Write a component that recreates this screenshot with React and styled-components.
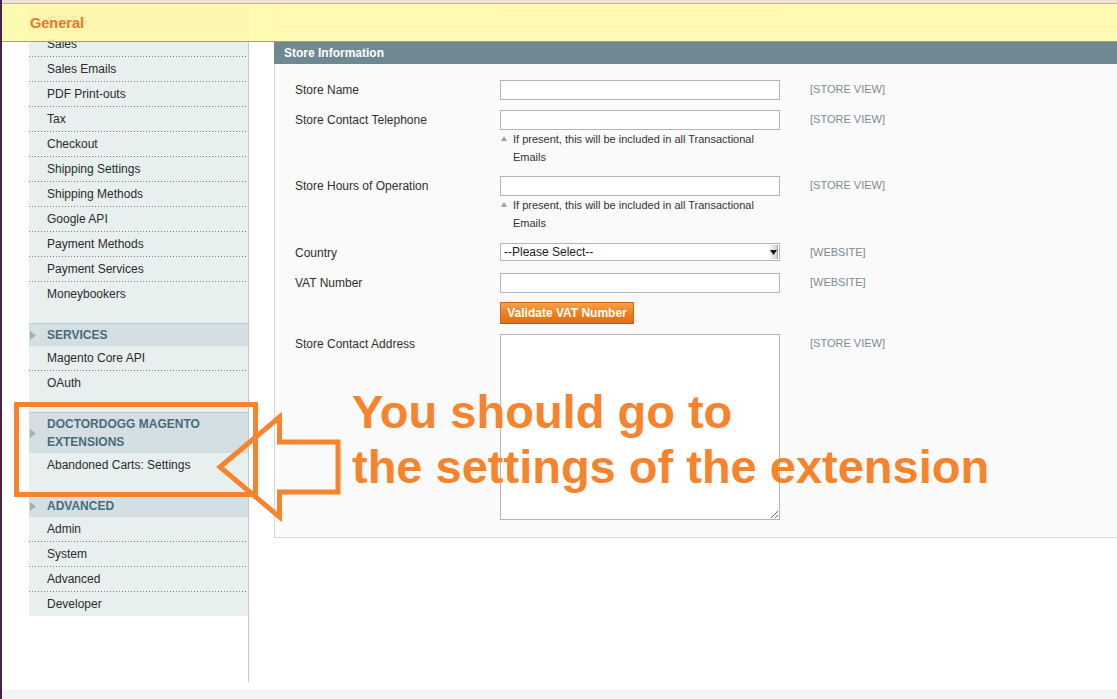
import React from 'react';
import styled, { createGlobalStyle } from 'styled-components';

const Global = createGlobalStyle`
  html, body { margin: 0; padding: 0; background: #fff; overflow: hidden; }
  body {
    font-family: "Liberation Sans", Arial, sans-serif;
    font-size: 12px;
    color: #2f2f2f;
  }
  * { box-sizing: border-box; }
`;

const ORANGE = '#f7832c';

const Page = styled.div`
  position: relative;
  width: 1117px;
  height: 699px;
  overflow: hidden;
  display: flex;
  flex-direction: column;
  border-left: 2px solid #4a2343;
`;

const Columns = styled.div`
  flex: 1;
  display: flex;
  align-items: stretch;
  padding-bottom: 8px;
`;

const Footer = styled.div`
  height: 9px;
  background: #f3f3f3;
`;

/* ---------- sidebar ---------- */
const Sidebar = styled.nav`
  width: 220px;
  margin-left: 27px;
  padding-top: 9px;
  border-right: 1px solid #c6c9ca;
`;

const Group = styled.section`
  background: #e7efef;
  border-top: 1px solid #b9c8cc;
  padding-bottom: ${(p) => (p.$last ? 0 : 17)}px;
`;

const GroupHeader = styled.div`
  display: flex;
  align-items: center;
  background: #d3dfe2;
  padding: 2px 12px 2px 0;
`;

const HeaderArrow = styled.span`
  width: 18px;
  flex: none;
  display: flex;
  align-items: center;
  padding-left: 1px;
`;

const HeaderTitle = styled.span`
  font-weight: bold;
  font-size: 12px;
  line-height: 18px;
  color: #486b7b;
  text-transform: uppercase;
`;

const Item = styled.div`
  height: 25px;
  line-height: 25px;
  padding-left: 18px;
  font-size: 12px;
  color: #2b2b2b;
  background: linear-gradient(to right, #7a7a7a 34%, transparent 0) left bottom / 3px 1px repeat-x;
  &:last-child {
    height: 24px;
    background: none;
  }
`;

const Triangle = () => (
  <svg width="6" height="9" viewBox="0 0 6 9">
    <path d="M0 0 L6 4.5 L0 9 Z" fill="#9fb2b8" />
  </svg>
);

const groups = [
  {
    title: 'Sales',
    items: [
      'Sales',
      'Sales Emails',
      'PDF Print-outs',
      'Tax',
      'Checkout',
      'Shipping Settings',
      'Shipping Methods',
      'Google API',
      'Payment Methods',
      'Payment Services',
      'Moneybookers',
    ],
  },
  { title: 'Services', items: ['Magento Core API', 'OAuth'] },
  { title: 'Doctordogg Magento Extensions', items: ['Abandoned Carts: Settings'] },
  { title: 'Advanced', items: ['Admin', 'System', 'Advanced', 'Developer'], last: true },
];

/* ---------- main ---------- */
const Main = styled.main`
  flex: 1;
  margin-left: 25px;
  display: flex;
  flex-direction: column;
  align-items: stretch;
`;

const PrevFieldset = styled.div`
  height: 32px;
  background: #fafafa;
  border-left: 1px solid #d6d6d6;
  border-bottom: 1px solid #d6d6d6;
  padding-left: 225px;
  margin-bottom: 10px;
`;

const PrevInput = styled.div`
  width: 280px;
  height: 16px;
  background: #fff;
  border: 1px solid #cfcfcf;
  border-top: none;
`;

const SectionHead = styled.h3`
  margin: 0;
  height: 22px;
  line-height: 22px;
  padding-left: 10px;
  background: #6f8892;
  color: #fff;
  font-size: 12px;
  font-weight: bold;
`;

const Panel = styled.div`
  background: #fafafa;
  border-left: 1px solid #d6d6d6;
  border-bottom: 1px solid #d6d6d6;
  padding: 16px 0 17px 20px;
  display: flex;
  flex-direction: column;
  gap: 10px;
`;

const Row = styled.div`
  display: grid;
  grid-template-columns: 205px 280px auto;
  align-items: start;
  margin-top: ${(p) => p.$shift || 0}px;
`;

const Label = styled.label`
  font-size: 12px;
  line-height: 20px;
  color: #2f2f2f;
`;

const Scope = styled.span`
  padding-left: 30px;
  font-size: 11px;
  line-height: 18px;
  color: #7d8b93;
`;

const TextInput = styled.input`
  display: block;
  width: 280px;
  height: 20px;
  margin: 0;
  padding: 0 3px;
  border: 1px solid #b4b4b4;
  background: #fff;
  font: 12px "Liberation Sans", Arial, sans-serif;
`;

const Note = styled.div`
  display: flex;
  font-size: 11px;
  line-height: 18px;
  color: #333;
`;

const NoteIcon = styled.span`
  width: 13px;
  flex: none;
  padding: 6px 0 0 1px;
  display: flex;
  align-items: flex-start;
`;

const SelectBox = styled.div`
  width: 280px;
  height: 18px;
  border: 1px solid #b4b4b4;
  background: #fff;
  display: flex;
  align-items: center;
  justify-content: space-between;
  padding: 0 1px 0 3px;
  font-size: 12px;
  color: #222;
`;

const SelectArrow = styled.span`
  width: 9px;
  height: 14px;
  display: flex;
  align-items: center;
  justify-content: center;
  background: linear-gradient(to right, #f4f4f4, #d2d2d2);
  border-right: 1px solid #a8a8a8;
`;

const Button = styled.button`
  display: block;
  height: 22px;
  width: 134px;
  padding: 0;
  margin: 0;
  border: 1px solid #d0671c;
  border-bottom-color: #b9571a;
  background: linear-gradient(#f7a04a, #f0851f 45%, #e56a17);
  color: #fff;
  font: bold 12px "Liberation Sans", Arial, sans-serif;
  text-align: center;
`;

const TextArea = styled.textarea`
  display: block;
  width: 280px;
  height: 186px;
  margin: 0;
  border: 1px solid #b4b4b4;
  background: #fff;
  resize: both;
`;

/* ---------- top bar & annotation overlays ---------- */
const TopBar = styled.header`
  position: absolute;
  top: 0;
  left: -2px;
  width: 1117px;
  border-top: 3px solid #efe2d3;
`;

const TopBand = styled.div`
  height: 39px;
  border-top: 1px solid #c2b597;
  border-bottom: 1px solid #a59d7c;
  background: rgba(255, 250, 168, 0.9);
  display: flex;
  align-items: center;
  padding-left: 30px;
`;

const TopTitle = styled.h2`
  margin: 0;
  font-size: 14.5px;
  font-weight: bold;
  color: #e57a2c;
`;

const Annotation = styled.svg`
  position: absolute;
  left: -2px;
  top: 0;
  pointer-events: none;
`;

const Callout = styled.div`
  position: absolute;
  left: 350px;
  top: 384px;
  font-family: "Liberation Sans", Arial, sans-serif;
  font-weight: bold;
  font-size: 47px;
  line-height: 55px;
  color: ${ORANGE};
  white-space: nowrap;
  pointer-events: none;
`;

const HelpNote = ({ children }) => (
  <Note>
    <NoteIcon>
      <svg width="6" height="5" viewBox="0 0 6 5">
        <path d="M3 0 L6 5 L0 5 Z" fill="#9aa4a8" />
      </svg>
    </NoteIcon>
    <span>{children}</span>
  </Note>
);

const noteText = 'If present, this will be included in all Transactional Emails';

export default function App() {
  return (
    <>
      <Global />
      <Page>
        <Columns>
          <Sidebar>
            {groups.map((g) => (
              <Group key={g.title} $last={g.last}>
                <GroupHeader>
                  <HeaderArrow>
                    <Triangle />
                  </HeaderArrow>
                  <HeaderTitle>{g.title}</HeaderTitle>
                </GroupHeader>
                {g.items.map((it) => (
                  <Item key={it}>{it}</Item>
                ))}
              </Group>
            ))}
          </Sidebar>

          <Main>
            <PrevFieldset>
              <PrevInput />
            </PrevFieldset>
            <SectionHead>Store Information</SectionHead>
            <Panel>
              <Row>
                <Label>Store Name</Label>
                <TextInput />
                <Scope>[STORE VIEW]</Scope>
              </Row>
              <Row>
                <Label>Store Contact Telephone</Label>
                <div>
                  <TextInput />
                  <HelpNote>{noteText}</HelpNote>
                </div>
                <Scope>[STORE VIEW]</Scope>
              </Row>
              <Row>
                <Label>Store Hours of Operation</Label>
                <div>
                  <TextInput />
                  <HelpNote>{noteText}</HelpNote>
                </div>
                <Scope>[STORE VIEW]</Scope>
              </Row>
              <Row $shift={1}>
                <Label>Country</Label>
                <SelectBox>
                  <span>--Please Select--</span>
                  <SelectArrow>
                    <svg width="7" height="5" viewBox="0 0 7 5">
                      <path d="M0 0 L7 0 L3.5 5 Z" fill="#111" />
                    </svg>
                  </SelectArrow>
                </SelectBox>
                <Scope>[WEBSITE]</Scope>
              </Row>
              <Row>
                <Label>VAT Number</Label>
                <TextInput />
                <Scope>[WEBSITE]</Scope>
              </Row>
              <Row $shift={-1}>
                <span />
                <Button type="button">Validate VAT Number</Button>
              </Row>
              <Row>
                <Label>Store Contact Address</Label>
                <TextArea />
                <Scope>[STORE VIEW]</Scope>
              </Row>
            </Panel>
          </Main>
        </Columns>
        <Footer />

        <TopBar>
          <TopBand>
            <TopTitle>General</TopTitle>
          </TopBand>
        </TopBar>

        <Annotation width="1117" height="699" viewBox="0 0 1117 699">
          <rect x="16.5" y="404.5" width="239" height="90" fill="none" stroke={ORANGE} strokeWidth="5" />
          <polygon
            points="220,467 279.5,417 279.5,442 338,442 338,492 279.5,492 279.5,517"
            fill="none"
            stroke={ORANGE}
            strokeWidth="5"
            strokeLinejoin="miter"
          />
        </Annotation>
        <Callout>
          You should go to
          <br />
          the settings of the extension
        </Callout>
      </Page>
    </>
  );
}
